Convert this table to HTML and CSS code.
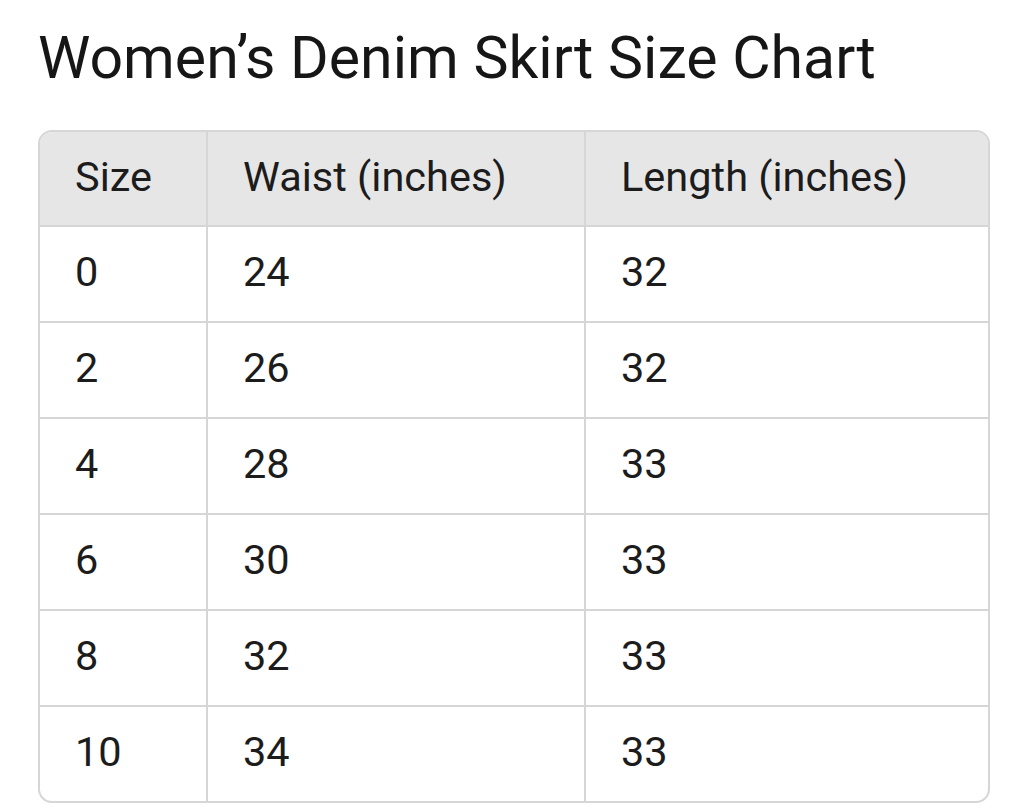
FILE: index.html
```html
<!DOCTYPE html>
<html lang="en">
<head>
<meta charset="utf-8">
<title>Women’s Denim Skirt Size Chart</title>
<link rel="stylesheet" href="styles.css">
</head>
<body>
<main class="page">
  <h1 class="title">Women’s Denim Skirt Size Chart</h1>
  <div class="chart" role="table">
    <div class="cell head" role="columnheader">Size</div>
    <div class="cell head" role="columnheader">Waist (inches)</div>
    <div class="cell head last" role="columnheader">Length (inches)</div>

    <div class="cell">0</div><div class="cell">24</div><div class="cell last">32</div>
    <div class="cell">2</div><div class="cell">26</div><div class="cell last">32</div>
    <div class="cell">4</div><div class="cell">28</div><div class="cell last">33</div>
    <div class="cell">6</div><div class="cell">30</div><div class="cell last">33</div>
    <div class="cell">8</div><div class="cell">32</div><div class="cell last">33</div>
    <div class="cell bottom">10</div><div class="cell bottom">34</div><div class="cell last bottom">33</div>
  </div>
</main>
</body>
</html>
```

FILE: styles.css
```css
html, body {
  margin: 0;
  padding: 0;
  background: #ffffff;
}

body {
  font-family: Roboto, "Liberation Sans", Arial, sans-serif;
  color: #1c1c1c;
}

.page {
  padding: 22px 34px 0 38px;
}

.title {
  margin: 0 0 36px 0;
  font-size: 59px;
  line-height: 72px;
  font-weight: 400;
  color: #161616;
  letter-spacing: 0;
}

.chart {
  display: grid;
  grid-template-columns: 168px 378px 1fr;
  border: 2px solid #d6d6d6;
  border-radius: 14px;
  overflow: hidden;
  width: 948px;
}

.cell {
  font-size: 41.5px;
  line-height: 90px;
  height: 96px;
  box-sizing: border-box;
  padding: 0 0 4px 35px;
  border-right: 2px solid #d6d6d6;
  border-bottom: 2px solid #d6d6d6;
  white-space: nowrap;
}

.cell.head {
  background: #e6e6e6;
  height: 95px;
}

.cell.last {
  border-right: none;
}

.cell.bottom {
  border-bottom: none;
  height: 94px;
}
```
